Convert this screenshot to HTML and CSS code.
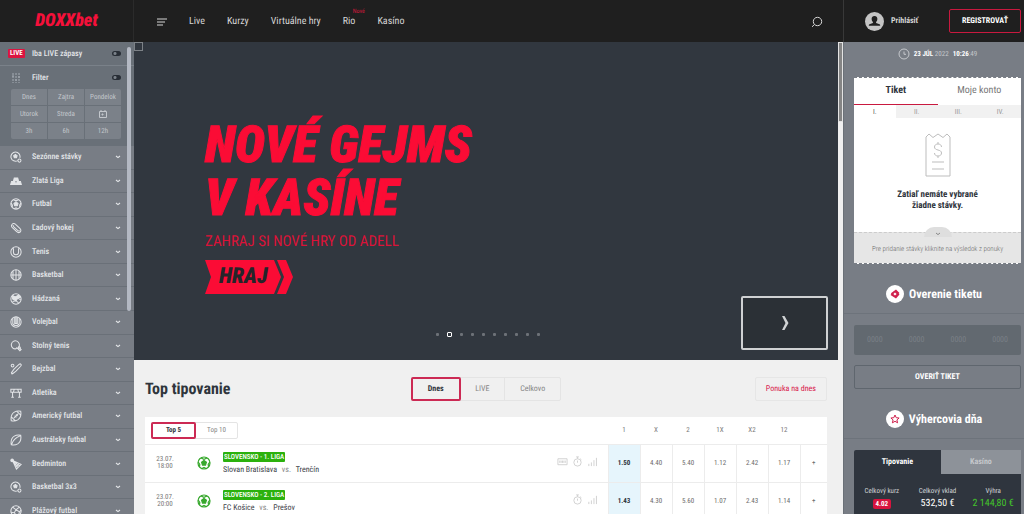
FILE: index.html
```html
<!DOCTYPE html>
<html lang="sk">
<head>
    <meta charset="UTF-8">
    <meta name="viewport" content="width=device-width, initial-scale=1.0">
    <title>DOXXbet</title>
    <link rel="stylesheet" href="styles.css">
</head>
<body>

    <!-- shared icons -->
    <svg class="sprite" aria-hidden="true">
        <symbol id="chevron" viewBox="0 0 6 4"><path d="M1 1l2 1.6L5 1"/></symbol>
        <symbol id="ball" viewBox="0 0 14 14"><circle cx="7" cy="7" r="6"/><path class="fill" d="M7 4.6l2.4 1.7-.9 2.8h-3l-.9-2.8z"/><path d="M4 2l3 1.3L10 2M1.2 6l1.6 2.3-.3 2.4M12.800 6l-1.600 2.300.3 2.400M5 12.600l2-1.100 2 1.100"/></symbol>
        <symbol id="ball-plus" viewBox="0 0 14 14"><path d="M9 11.200A5.300 5.300 0 1 1 11.500 8"/><path class="fill" d="M6.300 4l2 1.400-.7 2.400H5L4.300 5.400z"/><circle cx="11" cy="11.200" r="1.800"/></symbol>
        <symbol id="clock" viewBox="0 0 12 12"><circle cx="6" cy="6" r="5"/><path d="M6 3.500V6.300h2"/></symbol>
        <symbol id="stopwatch" viewBox="0 0 12 12"><circle cx="6" cy="7" r="4"/><path d="M4.500 1h3M6 1v2M6 5v2.300M9 3l1.200 1"/></symbol>
        <symbol id="stats" viewBox="0 0 12 12"><path d="M2 8.500V11M4.800 7v4M7.600 4.500V11M10.300 2v9"/></symbol>
    </svg>

    <header class="topbar">
        <a class="logo" href="#">DOXXbet</a>
        <nav class="menu">
            <button class="burger" aria-label="Menu"><svg viewBox="0 0 10 8"><path d="M0 1h10M0 4h8M0 7h6"/></svg></button>
            <a href="#">Live</a>
            <a href="#">Kurzy</a>
            <a href="#">Virtuálne hry</a>
            <a href="#" class="has-new">Rio<span class="new">Nové</span></a>
            <a href="#">Kasíno</a>
            <button class="search" aria-label="Hľadať"><svg viewBox="0 0 12 12"><circle cx="6.500" cy="5.500" r="4.200"/><path d="M3.500 8.500L1 10.800"/></svg></button>
        </nav>
        <div class="account">
            <a class="login" href="#">
                <svg viewBox="0 0 18 18"><circle cx="9" cy="9" r="9"/><path d="M9 3.700c2 0 2.900 1.400 2.700 3.100-.1 1.300-.7 2-1.200 2.600v1l3.300 1.300c.5.200.6.700.6 1.300H3.600c0-.6.100-1.100.6-1.300l3.300-1.300v-1C7 8.800 6.400 8.100 6.300 6.800 6.100 5.100 7 3.700 9 3.700z"/></svg>
                Prihlásiť
            </a>
            <button class="register">REGISTROVAŤ</button>
        </div>
    </header>

    <div class="layout">
        <aside class="sports">
            <div class="filters">
                <div class="filter-row live-row">
                    <span class="live-tag">LIVE</span>
                    <label for="only-live">Iba LIVE zápasy</label>
                    <input class="toggle" type="checkbox" id="only-live">
                </div>
                <div class="filter-row">
                    <svg class="sliders" viewBox="0 0 10 10"><path d="M2 0v10M5 0v10M8 0v10" stroke-dasharray="2 1"/><path d="M1 3h2M4 7h2M7 4h2"/></svg>
                    <label for="filter">Filter</label>
                    <input class="toggle" type="checkbox" id="filter">
                </div>
                <div class="days">
                    <button>Dnes</button>
                    <button>Zajtra</button>
                    <button>Pondelok</button>
                    <button>Utorok</button>
                    <button>Streda</button>
                    <button aria-label="Kalendár"><svg viewBox="0 0 8 8"><path d="M.5 1.500h7v6h-7zM2 0v2M6 0v2"/><path class="fill" d="M3 4h1v1H3z"/></svg></button>
                    <button>3h</button>
                    <button>6h</button>
                    <button>12h</button>
                </div>
            </div>
            <ul class="sport-list">
                <li><a href="#"><svg><use href="#ball-plus"/></svg>Sezónne stávky<svg class="chev"><use href="#chevron"/></svg></a></li>
                <li><a href="#"><svg viewBox="0 0 14 14"><path class="fill" d="M5 3.500h4l.8 3H4.200zM1.800 7.500h4L6.600 11H.8zM8.200 7.500h4l1 3.500H7.400z"/></svg>Zlatá Liga<svg class="chev"><use href="#chevron"/></svg></a></li>
                <li><a href="#"><svg><use href="#ball"/></svg>Futbal<svg class="chev"><use href="#chevron"/></svg></a></li>
                <li><a href="#"><svg viewBox="0 0 14 14"><path d="M2 3.500C3 1.500 5 1.200 6.500 2.700l5 4.600c1.700 1.600 1.400 3.400.3 4.400-1.200 1-2.800.8-4-.4l-5-4.600C1.600 5.500 1.500 4.500 2 3.500z"/><path d="M3.500 3.500c0 1 .4 1.700 1.200 2.400l4.200 3.800c.9.800 1.800.9 2.600.6"/></svg>Ľadový hokej<svg class="chev"><use href="#chevron"/></svg></a></li>
                <li><a href="#"><svg viewBox="0 0 14 14"><circle cx="7" cy="7" r="6"/><path d="M4 2.500v4.800a3 3 0 0 0 6 0V2.500"/></svg>Tenis<svg class="chev"><use href="#chevron"/></svg></a></li>
                <li><a href="#"><svg viewBox="0 0 14 14"><circle cx="7" cy="7" r="6"/><path d="M7 1v12M1 7h12M3.500 2.500v9M10.500 2.500v9"/></svg>Basketbal<svg class="chev"><use href="#chevron"/></svg></a></li>
                <li><a href="#"><svg viewBox="0 0 14 14"><circle cx="7" cy="7" r="6"/><path class="fill" d="M3 3l3 1.500L10 2.500l2 2.500-3 1-2 3-4-2z"/><path d="M3 10l4-1 3 2.500M9 6l3.500 2"/></svg>Hádzaná<svg class="chev"><use href="#chevron"/></svg></a></li>
                <li><a href="#"><svg viewBox="0 0 14 14"><circle cx="7" cy="7" r="6"/><path d="M5.500 1.300v7.500h3V1.300M3.300 2.500v6.700c1.500 2.500 5.900 2.500 7.400 0V2.500M7 1v7.500"/></svg>Volejbal<svg class="chev"><use href="#chevron"/></svg></a></li>
                <li><a href="#"><svg viewBox="0 0 14 14"><path d="M10 8.500A4.700 4.700 0 1 0 7 10.300l1-1.300 3.500 3.500 1.500-1.500z"/><circle cx="10.800" cy="9.300" r="1.300"/></svg>Stolný tenis<svg class="chev"><use href="#chevron"/></svg></a></li>
                <li><a href="#"><svg viewBox="0 0 14 14"><circle cx="3" cy="3" r="1.600"/><path d="M12.800 1.500c.6.700.3 1.500-.4 2.300L7 9.500 3 12.500 1.700 11.200l3-4L10.500 1.700c.8-.7 1.700-.8 2.300-.2z"/><path d="M1.500 13l1.200-1.200"/></svg>Bejzbal<svg class="chev"><use href="#chevron"/></svg></a></li>
                <li><a href="#"><svg viewBox="0 0 14 14"><path d="M1 2.500h12v3.500H1zM3 6v6M11 6v6M1.500 12h3M9.500 12h3M5 2.500L4 6M9 2.500L10 6"/></svg>Atletika<svg class="chev"><use href="#chevron"/></svg></a></li>
                <li><a href="#"><svg viewBox="0 0 14 14"><path d="M12.500 1.500c.8 4.500-.5 8-3.500 10-2.500 1.500-5 1.500-7.500 1-.8-4.500.5-8 3.500-10 2.500-1.500 5-1.500 7.500-1zM4.500 9.500l5-5M8 1.500L12.500 6M1.500 8L6 12.500M5.500 6.500l2 2M7 5l2 2"/></svg>Americký futbal<svg class="chev"><use href="#chevron"/></svg></a></li>
                <li><a href="#"><svg viewBox="0 0 14 14"><path d="M12.500 1.500c.8 4.500-.5 8-3.500 10-2.500 1.500-5 1.500-7.500 1-.8-4.500.5-8 3.500-10 2.500-1.500 5-1.500 7.500-1zM2 12c1-4 4-7.500 10-10"/></svg>Austrálsky futbal<svg class="chev"><use href="#chevron"/></svg></a></li>
                <li><a href="#"><svg viewBox="0 0 14 14"><path d="M3 3l10 4.500-5.500 5.500zM3 3l8.500 6.500M3 3l6.500 8.500M8.500 5.500l-3 3.500M10.500 6.500L7 10.800"/><circle class="fill" cx="2.500" cy="2.800" r="1.500"/></svg>Bedminton<svg class="chev"><use href="#chevron"/></svg></a></li>
                <li><a href="#"><svg><use href="#ball-plus"/></svg>Basketbal 3x3<svg class="chev"><use href="#chevron"/></svg></a></li>
                <li><a href="#"><svg viewBox="0 0 14 14"><circle cx="7" cy="7" r="6"/><path d="M3 2.500l4 3 4-3M7 5.500L5 9l-4-.5M5 9l3 4M7 5.500l4 2.500-1 4M11 8l2-2"/></svg>Plážový futbal<svg class="chev"><use href="#chevron"/></svg></a></li>
            </ul>
            <span class="scroll-thumb"></span>
        </aside>

        <main>
            <section class="hero">
                <span class="hero-mark"></span>
                <h1>NOVÉ GEJMS<br>V KASÍNE</h1>
                <p>ZAHRAJ SI NOVÉ HRY OD ADELL</p>
                <a class="play" href="#">
                    <svg viewBox="0 0 88 34" preserveAspectRatio="none"><path d="M0 0h69l7 17-7 17H0l6-17zM72 0h9l7 17-7 17h-9l7-17z"/></svg>
                    <span>HRAJ</span>
                </a>
                <div class="dots">
                    <i></i><i class="active"></i><i></i><i></i><i></i><i></i><i></i><i></i><i></i><i></i>
                </div>
                <button class="next" aria-label="Ďalej"><svg viewBox="0 0 8 14"><path d="M1 0h2.500L7.500 7l-4 7H1l3.500-7z"/></svg></button>
            </section>

            <section class="tips">
                <div class="tips-head">
                    <h2>Top tipovanie</h2>
                    <div class="tabs">
                        <button class="active">Dnes</button>
                        <button>LIVE</button>
                        <button>Celkovo</button>
                    </div>
                    <a class="offer" href="#">Ponuka na dnes</a>
                </div>

                <table class="odds">
                    <colgroup>
                        <col class="c-time"><col class="c-ball"><col><col class="c-icons">
                        <col class="c-odd"><col class="c-odd"><col class="c-odd"><col class="c-odd"><col class="c-odd"><col class="c-odd"><col class="c-more">
                    </colgroup>
                    <thead>
                        <tr>
                            <td colspan="4">
                                <div class="tabs small">
                                    <button class="active">Top 5</button>
                                    <button>Top 10</button>
                                </div>
                            </td>
                            <th>1</th><th>X</th><th>2</th><th>1X</th><th>X2</th><th>12</th><th></th>
                        </tr>
                    </thead>
                    <tbody>
                        <tr>
                            <td class="time">23.07.<br>18:00</td>
                            <td><svg class="green"><use href="#ball"/></svg></td>
                            <td class="match"><span class="league">SLOVENSKO - 1. LIGA</span><div class="teams">Slovan Bratislava <em>vs.</em> Trenčín</div></td>
                            <td class="icons"><svg viewBox="0 0 12 12"><path d="M1 3h10v6.500H1zM3 5v2.500M4.500 5v2.500M6 5v2.500M7.500 5v2.500M9 5v2.500"/></svg><svg><use href="#stopwatch"/></svg><svg><use href="#stats"/></svg></td>
                            <td class="odd best">1.50</td><td class="odd">4.40</td><td class="odd">5.40</td><td class="odd">1.12</td><td class="odd">2.42</td><td class="odd">1.17</td><td class="odd">+</td>
                        </tr>
                        <tr>
                            <td class="time">23.07.<br>20:00</td>
                            <td><svg class="green"><use href="#ball"/></svg></td>
                            <td class="match"><span class="league">SLOVENSKO - 2. LIGA</span><div class="teams">FC Košice <em>vs.</em> Prešov</div></td>
                            <td class="icons"><svg><use href="#stopwatch"/></svg><svg><use href="#stats"/></svg></td>
                            <td class="odd best">1.43</td><td class="odd">4.30</td><td class="odd">5.60</td><td class="odd">1.07</td><td class="odd">2.43</td><td class="odd">1.14</td><td class="odd">+</td>
                        </tr>
                    </tbody>
                </table>
            </section>
            <span class="scroll-track"></span>
        </main>

        <aside class="panel">
            <div class="date"><svg><use href="#clock"/></svg><span><b>23 JÚL</b> 2022</span><span><b>10:26</b>:49</span></div>

            <section class="ticket">
                <div class="ticket-tabs">
                    <button class="active">Tiket</button>
                    <button>Moje konto</button>
                </div>
                <div class="ticket-nums">
                    <button class="active">I.</button><button>II.</button><button>III.</button><button>IV.</button>
                </div>
                <div class="ticket-body">
                    <svg viewBox="0 0 26 44"><path d="M1 43V4l3-3 4 3.500L13 1l5 3.500L22 1l3 3v39zM7 29h12M7 36h12"/><path d="M16.500 14c0-2-1.500-3-3.500-3s-3.500 1-3.500 3c0 4 7 2 7 6 0 2-1.500 3-3.500 3s-3.500-1-3.500-3M13 9v2M13 23v2"/></svg>
                    <p>Zatiaľ nemáte vybrané<br>žiadne stávky.</p>
                </div>
                <div class="ticket-foot">
                    <span class="notch"><svg class="chev"><use href="#chevron"/></svg></span>
                    Pre pridanie stávky kliknite na výsledok z ponuky
                </div>
            </section>

            <h3><svg class="round" viewBox="0 0 18 18"><circle cx="9" cy="9" r="9"/><path class="red" d="M10 4.500l3.500 3.500-.8.800.8.800-3.500 3.900L4.500 10l.9-.9-.5-.8z"/><path class="white" d="M9 7.400L10.600 9 9 10.600 7.400 9z"/></svg>Overenie tiketu</h3>
            <form class="verify">
                <div class="code">
                    <input type="text" placeholder="0000" aria-label="Kód 1">
                    <input type="text" placeholder="0000" aria-label="Kód 2">
                    <input type="text" placeholder="0000" aria-label="Kód 3">
                    <input type="text" placeholder="0000" aria-label="Kód 4">
                </div>
                <button type="button">OVERIŤ TIKET</button>
            </form>

            <h3><svg class="round" viewBox="0 0 18 18"><circle cx="9" cy="9" r="9"/><path class="line" d="M9 5l1.200 2.700 2.900.3-2.200 1.900.7 2.900L9 11.300l-2.600 1.500.7-2.900L4.900 8l2.900-.3z"/></svg>Výhercovia dňa</h3>
            <section class="winners">
                <div class="winner-tabs">
                    <button class="active">Tipovanie</button>
                    <button>Kasíno</button>
                </div>
                <dl>
                    <div><dt>Celkový kurz</dt><dd><span class="rate">4.02</span></dd></div>
                    <div><dt>Celkový vklad</dt><dd>532,50 €</dd></div>
                    <div><dt>Výhra</dt><dd class="win">2 144,80 €</dd></div>
                </dl>
            </section>
        </aside>
    </div>

</body>
</html>
```
FILE: styles.css
```css
* {
    box-sizing: border-box;
}

html, body {
    height: 100%;
    margin: 0;
}

body {
    display: flex;
    flex-direction: column;
    overflow: hidden;
    font-family: "Roboto Condensed", "Liberation Sans Narrow", Roboto, sans-serif;
    font-size: 8px;
    line-height: 10px;
    text-rendering: geometricPrecision;
    color: #2f353c;
    background: #787d85;
}

button, input {
    margin: 0;
    padding: 0;
    border: none;
    background: none;
    font: inherit;
    text-rendering: inherit;
    color: inherit;
    cursor: pointer;
}

a {
    color: inherit;
    text-decoration: none;
}

h1, h2, h3, p, ul, dl, dd {
    margin: 0;
    padding: 0;
}

svg {
    display: block;
    fill: none;
    stroke: currentColor;
}

svg .fill, symbol .fill {
    fill: currentColor;
}

.sprite {
    position: absolute;
    width: 0;
    height: 0;
}

/* top bar */
.topbar {
    display: grid;
    grid-template-columns: 134px 1fr 181px;
    flex: 0 0 42px;
    background: #1f1f1f;
    color: #d6d6d6;
}

.logo {
    display: flex;
    align-items: center;
    justify-content: center;
    border-right: 1px solid #2b2b2b;
    font-size: 18px;
    font-weight: 900;
    font-style: italic;
    color: #f5103a;
}

.menu {
    display: flex;
    align-items: center;
    gap: 22px;
    padding: 1px 20px 0 23px;
    font-size: 10px;
}

.burger svg {
    width: 10px;
    height: 8px;
}

.has-new {
    position: relative;
}

.new {
    position: absolute;
    left: 10px;
    top: -10px;
    font-size: 6px;
    color: #d8173c;
}

.search {
    margin-left: auto;
}

.search svg {
    width: 12px;
    height: 12px;
}

.account {
    display: flex;
    align-items: center;
    justify-content: space-between;
    padding: 0 3px 0 21px;
    border-left: 1px solid #383838;
}

.login {
    display: flex;
    align-items: center;
    gap: 7px;
    font-weight: 700;
}

.login svg {
    width: 19px;
    height: 19px;
    stroke: none;
    fill: #c4c4c4;
}

.login path {
    fill: #1f1f1f;
}

.register {
    width: 72px;
    height: 24px;
    border: 1px solid #c9193f;
    border-radius: 2px;
    font-weight: 700;
    color: #fff;
}

/* columns */
.layout {
    display: grid;
    grid-template-columns: 134px 1fr 181px;
    flex: 1;
    min-height: 0;
}

.sports {
    position: relative;
    display: flex;
    flex-direction: column;
    min-height: 0;
    overflow: hidden;
    color: #e3e5e8;
    font-weight: 500;
}

.scroll-thumb {
    position: absolute;
    top: 5px;
    right: 3px;
    width: 4px;
    height: 264px;
    border-radius: 2px;
    background: #b4b9c3;
}

.filters {
    padding-bottom: 7px;
    background: #697078;
}

.filter-row {
    display: grid;
    grid-template-columns: 24px 1fr auto;
    align-items: center;
    height: 23px;
    padding: 0 13px 0 8px;
}

.live-row {
    height: 24px;
    border-bottom: 1px solid #7a8189;
}

.live-tag {
    justify-self: start;
    padding: 0 2px;
    border-radius: 1px;
    background: #dc1440;
    font-size: 7px;
    font-weight: 700;
    line-height: 9px;
    color: #fff;
}

.sliders {
    width: 10px;
    height: 10px;
    margin-left: 3px;
    color: #a5abb3;
    stroke-width: 1;
}

.toggle {
    appearance: none;
    width: 9px;
    height: 5px;
    border-radius: 3px;
    background: radial-gradient(circle at 3px 50%, #7b828a 1px, #282e36 2px);
}

.days {
    display: grid;
    grid-template-columns: repeat(3, 1fr);
    gap: 1px;
    margin: 0 13px 0 11px;
    border-radius: 2px;
    overflow: hidden;
    font-size: 7px;
    font-weight: 400;
}

.days button {
    display: flex;
    align-items: center;
    justify-content: center;
    height: 16px;
    background: #7b8189;
    color: #c3c7cc;
}

.days svg {
    width: 8px;
    height: 8px;
}

.sport-list {
    flex: 1;
    display: grid;
    grid-auto-rows: minmax(22px, 1fr);
    margin-bottom: -9px;
    list-style: none;
}

.sport-list li {
    border-bottom: 1px solid #6a7078;
}

.sport-list a {
    display: grid;
    grid-template-columns: 22px 1fr auto;
    align-items: center;
    height: 100%;
    padding: 0 13px 0 10px;
}

.sport-list svg {
    width: 12px;
    height: 12px;
    stroke-width: 1.2;
}

.sport-list .chev, .chev {
    width: 6px;
    height: 4px;
}

/* main column */
main {
    position: relative;
    min-width: 0;
    overflow: hidden;
    background: #f0f0f0;
}

.scroll-track {
    position: absolute;
    top: 0;
    right: 0;
    width: 5px;
    height: 80px;
    border: 1px solid #e4e4e4;
    background: #858585;
}

.hero {
    position: relative;
    height: 318px;
    margin-right: 5px;
    padding: 77px 71px 0;
    background: #31373f;
    color: #fb0c35;
}

.hero-mark {
    position: absolute;
    top: 0;
    left: 0;
    width: 9px;
    height: 9px;
    border: 1px solid #7d8287;
}

.hero h1 {
    font-size: 51px;
    font-weight: 900;
    font-style: italic;
    line-height: 53px;
    -webkit-text-stroke: 1px currentColor;
}

.hero p {
    margin-top: 4px;
    font-size: 15px;
    line-height: 24px;
    color: #dc1238;
}

.play {
    position: relative;
    display: block;
    width: 88px;
    height: 34px;
    margin-top: 7px;
}

.play svg {
    width: 100%;
    height: 100%;
    fill: currentColor;
    stroke: none;
}

.play span {
    position: absolute;
    top: 0;
    left: 14px;
    font-size: 22px;
    font-weight: 900;
    font-style: italic;
    line-height: 34px;
    color: #24252a;
}

.dots {
    position: absolute;
    left: 0;
    right: 0;
    bottom: 23px;
    display: flex;
    align-items: center;
    justify-content: center;
    gap: 8px;
    padding-left: 4px;
}

.dots i {
    width: 3px;
    height: 3px;
    border-radius: 1px;
    background: #6c7177;
}

.dots .active {
    width: 5px;
    height: 5px;
    border: 1px solid #fff;
    background: none;
}

.next {
    position: absolute;
    right: 10px;
    bottom: 10px;
    display: flex;
    align-items: center;
    justify-content: center;
    width: 87px;
    height: 54px;
    border: 2px solid #cfd1d3;
    border-radius: 2px;
    background: #2b3036;
}

.next svg {
    width: 8px;
    height: 14px;
    fill: #d0d2d4;
    stroke: none;
}

.tips {
    padding: 0 16px 0 11px;
}

.tips-head {
    display: grid;
    grid-template-columns: 1fr auto 1fr;
    align-items: center;
    height: 57px;
}

.tips-head h2 {
    font-size: 16px;
    line-height: 20px;
}

.tabs {
    display: flex;
    width: 150px;
    border: 1px solid #e4e4e4;
    border-radius: 2px;
    color: #858585;
}

.tabs button {
    flex: 1 1 auto;
    height: 24px;
    margin: -1px 0;
    border-right: 1px solid #e4e4e4;
}

.tabs button:last-child {
    border-right: none;
}

.tabs .active {
    margin-left: -1px;
    border: 2px solid #cc2a54;
    border-radius: 2px;
    font-weight: 700;
    color: #2f353c;
}

.tabs.small {
    width: 87px;
    margin-left: 6px;
    font-size: 7px;
}

.tabs.small button {
    flex: 1;
    height: 17px;
}

.offer {
    justify-self: end;
    padding: 6px 10px;
    border: 1px solid #e6e6e6;
    border-radius: 2px;
    color: #d8174a;
}

.odds {
    width: 100%;
    table-layout: fixed;
    border-collapse: collapse;
    background: #fff;
}

.c-time { width: 40px; }
.c-ball { width: 38px; }
.c-icons { width: 62px; }
.c-odd { width: 32px; }
.c-more { width: 27px; }

.odds th, .odds td {
    padding: 0;
}

.odds thead tr {
    height: 27px;
}

.odds th {
    font-size: 7px;
    font-weight: 400;
    color: #777;
}

.odds tbody tr {
    height: 38px;
    border-top: 1px solid #ececec;
}

.time {
    text-align: center;
    font-size: 7px;
    line-height: 7px;
    color: #777;
}

.green {
    width: 14px;
    height: 14px;
    margin-left: 12px;
    color: #37a82d;
    stroke-width: 1.2;
}

.league {
    display: inline-block;
    padding: 0 1px;
    border-radius: 1px;
    background: #2bb10d;
    font-size: 7px;
    font-weight: 500;
    color: #fff;
}

.teams {
    margin-top: 3px;
    color: #3c4147;
}

.teams em {
    margin: 0 3px;
    font-style: normal;
    color: #888;
}

.icons svg {
    display: inline-block;
    width: 11px;
    height: 11px;
    margin-left: 4px;
    color: #cfcfcf;
}

.icons {
    text-align: right;
}

.odds .icons {
    padding-right: 10px;
}

.odd {
    border-left: 1px solid #ececec;
    text-align: center;
    font-size: 7px;
    color: #6a6a6a;
}

.best {
    background: #e6f5fc;
    font-weight: 700;
    color: #2f353c;
}

/* right column */
.panel {
    min-width: 0;
    overflow: hidden;
    padding: 0 3px 0 10px;
    border-left: 1px solid #6b7178;
    color: #fff;
}

.date {
    display: flex;
    align-items: center;
    justify-content: center;
    gap: 4px;
    height: 24px;
    font-size: 7px;
    color: #c5c8cc;
}

.date svg {
    width: 12px;
    height: 12px;
}

.date b {
    color: #fff;
}

.ticket {
    margin-top: 11px;
    border-top: 1px dashed #787d85;
    border-bottom: 1px dashed #787d85;
    background: #fff;
    color: #2f353c;
}

.ticket-tabs, .ticket-nums, .winner-tabs {
    display: flex;
}

.ticket-tabs button {
    flex: 1;
    height: 27px;
    border-bottom: 1px solid transparent;
    font-size: 10px;
    color: #777;
}

.ticket-tabs .active {
    border-bottom-color: #c9193f;
    font-weight: 700;
    color: #2f353c;
}

.ticket-nums button {
    flex: 1;
    height: 13px;
    background: #f1f1f1;
    font-size: 7px;
    color: #999;
}

.ticket-nums .active {
    background: #fff;
    color: #555;
}

.ticket-body {
    display: flex;
    flex-direction: column;
    align-items: center;
    gap: 13px;
    height: 114px;
    padding-top: 15px;
}

.ticket-body svg {
    width: 26px;
    height: 44px;
    color: #bdbdbd;
}

.ticket-body p {
    font-size: 9px;
    font-weight: 700;
    line-height: 11px;
    text-align: center;
}

.ticket-foot {
    position: relative;
    padding: 11px 0 9px;
    border-top: 1px dashed #ccc;
    background: #e6e6e6;
    text-align: center;
    font-size: 7px;
    font-weight: 300;
    color: #666;
}

.notch {
    position: absolute;
    top: -6px;
    left: 50%;
    display: flex;
    justify-content: center;
    width: 28px;
    height: 10px;
    margin-left: -14px;
    padding-top: 5px;
    border-radius: 14px 14px 0 0;
    background: #dedede;
    color: #888;
}

.panel h3 {
    display: flex;
    align-items: center;
    justify-content: center;
    gap: 5px;
    height: 40px;
    margin: 10px -3px 0 -10px;
    border-bottom: 1px solid #6d737b;
    font-size: 12px;
}

.round {
    width: 18px;
    height: 18px;
    stroke: none;
    fill: #fff;
}

.round .red {
    fill: #d0214d;
}

.round .line {
    stroke: #d0214d;
}

.code {
    display: flex;
    height: 30px;
    margin-top: 11px;
    border-radius: 2px;
    background: #626970;
}

.code input {
    flex: 1;
    min-width: 0;
    text-align: center;
}

.code input::placeholder {
    color: #7a8087;
}

.verify button {
    width: 100%;
    height: 24px;
    margin-top: 10px;
    border: 1px solid #5f666e;
    border-radius: 2px;
    font-weight: 700;
}

.winners {
    margin-top: 11px;
    border-radius: 2px;
    background: #2f353e;
}

.winner-tabs button {
    flex: 0 0 52%;
    height: 24px;
    font-weight: 700;
}

.winner-tabs button:last-child {
    flex: 1;
    background: #8d9299;
    color: #c5c8cc;
}

.winners dl {
    display: grid;
    grid-template-columns: repeat(3, 1fr);
    padding: 12px 0 20px;
    text-align: center;
}

.winners dt {
    font-size: 7px;
    color: #d0d3d6;
}

.winners dd {
    margin-top: 2px;
    font-size: 10px;
    line-height: 12px;
}

.winners .win {
    color: #43c52b;
}

.rate {
    display: inline-block;
    padding: 0 3px;
    border-radius: 2px;
    background: #d8143e;
    font-size: 7px;
    font-weight: 700;
    line-height: 10px;
}
```
